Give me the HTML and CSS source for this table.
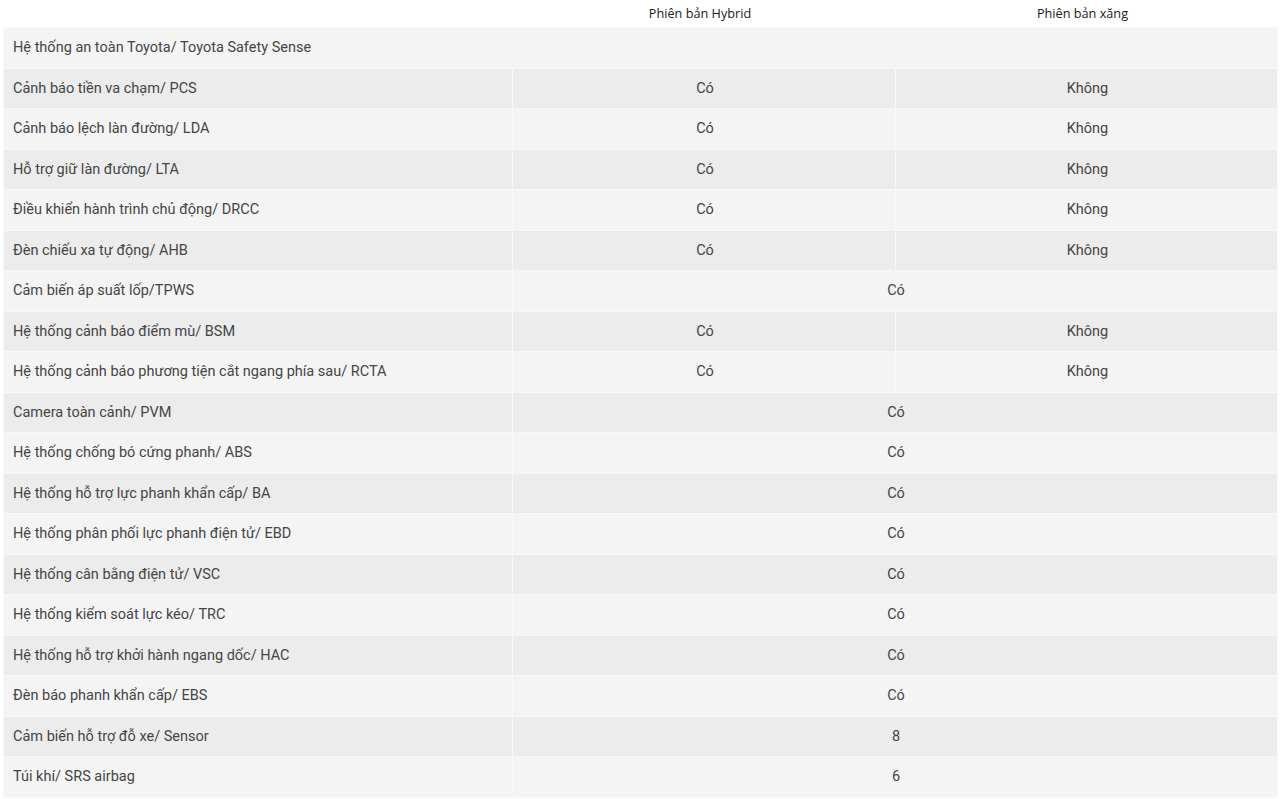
FILE: index.html
```html
<!DOCTYPE html>
<html lang="vi">
<head>
<meta charset="utf-8">
<title>Toyota Safety Sense</title>
<link rel="stylesheet" href="styles.css">
</head>
<body>
<table class="spec">
  <colgroup>
    <col class="col-name">
    <col class="col-hybrid">
    <col class="col-gas">
  </colgroup>
  <thead>
    <tr>
      <th></th>
      <th class="hd">Phiên bản Hybrid</th>
      <th class="hd">Phiên bản xăng</th>
    </tr>
  </thead>
  <tbody>
    <tr><td colspan="3">Hệ thống an toàn Toyota/ Toyota Safety Sense</td></tr>
    <tr><td>Cảnh báo tiền va chạm/ PCS</td><td class="v">Có</td><td class="v">Không</td></tr>
    <tr><td>Cảnh báo lệch làn đường/ LDA</td><td class="v">Có</td><td class="v">Không</td></tr>
    <tr><td>Hỗ trợ giữ làn đường/ LTA</td><td class="v">Có</td><td class="v">Không</td></tr>
    <tr><td>Điều khiển hành trình chủ động/ DRCC</td><td class="v">Có</td><td class="v">Không</td></tr>
    <tr><td>Đèn chiếu xa tự động/ AHB</td><td class="v">Có</td><td class="v">Không</td></tr>
    <tr><td>Cảm biến áp suất lốp/TPWS</td><td class="v" colspan="2">Có</td></tr>
    <tr><td>Hệ thống cảnh báo điểm mù/ BSM</td><td class="v">Có</td><td class="v">Không</td></tr>
    <tr><td>Hệ thống cảnh báo phương tiện cắt ngang phía sau/ RCTA</td><td class="v">Có</td><td class="v">Không</td></tr>
    <tr><td>Camera toàn cảnh/ PVM</td><td class="v" colspan="2">Có</td></tr>
    <tr><td>Hệ thống chống bó cứng phanh/ ABS</td><td class="v" colspan="2">Có</td></tr>
    <tr><td>Hệ thống hỗ trợ lực phanh khẩn cấp/ BA</td><td class="v" colspan="2">Có</td></tr>
    <tr><td>Hệ thống phân phối lực phanh điện tử/ EBD</td><td class="v" colspan="2">Có</td></tr>
    <tr><td>Hệ thống cân bằng điện tử/ VSC</td><td class="v" colspan="2">Có</td></tr>
    <tr><td>Hệ thống kiểm soát lực kéo/ TRC</td><td class="v" colspan="2">Có</td></tr>
    <tr><td>Hệ thống hỗ trợ khởi hành ngang dốc/ HAC</td><td class="v" colspan="2">Có</td></tr>
    <tr><td>Đèn báo phanh khẩn cấp/ EBS</td><td class="v" colspan="2">Có</td></tr>
    <tr><td>Cảm biến hỗ trợ đỗ xe/ Sensor</td><td class="v" colspan="2">8</td></tr>
    <tr><td>Túi khí/ SRS airbag</td><td class="v" colspan="2">6</td></tr>
  </tbody>
</table>
</body>
</html>
```
FILE: styles.css
```css
html, body {
  margin: 0;
  padding: 0;
  background: #fff;
}
body {
  padding: 0 3px;
}
.spec {
  width: 1274px;
  border-collapse: collapse;
  table-layout: fixed;
  font-family: Roboto, "Liberation Sans", sans-serif;
}
.col-name { width: 509px; }
.col-hybrid { width: 383px; }
.col-gas { width: 382px; }
.spec th {
  height: 26px;
  padding: 0 8px 1px 0;
  font-family: "Open Sans", "Noto Sans", sans-serif;
  font-size: 12.7px;
  font-weight: 400;
  color: #1a1a1a;
  text-align: center;
  vertical-align: middle;
}
.spec td {
  height: 40.5px;
  box-sizing: border-box;
  padding: 0 9px;
  font-size: 14.5px;
  color: #454545;
  border: 1px solid #f8f8f8;
  vertical-align: middle;
}
.spec td.v {
  text-align: center;
  padding-left: 11px;
}
.spec tbody tr:nth-child(odd) td { background: #f4f4f4; }
.spec tbody tr:nth-child(even) td { background: #ececec; }
```
